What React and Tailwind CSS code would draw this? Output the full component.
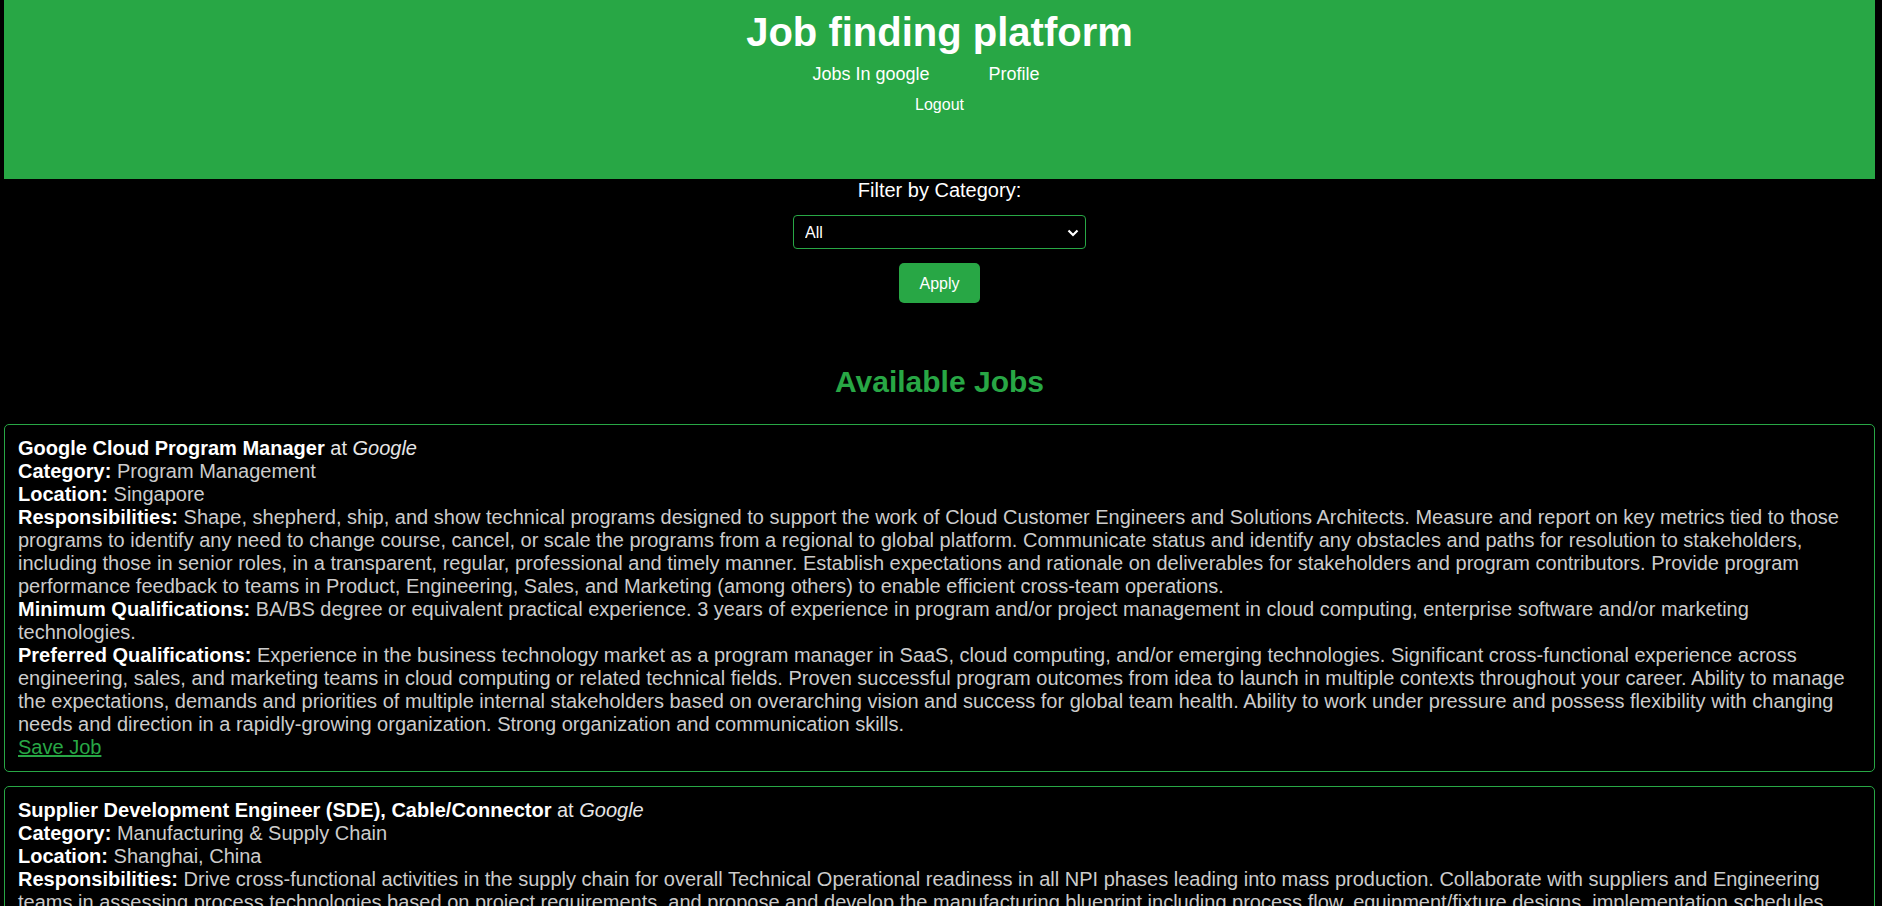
import React, { useState } from 'react'

const jobs = [
    {
        id: 1,
        title: 'Google Cloud Program Manager',
        company: 'Google',
        category: 'Program Management',
        location: 'Singapore',
        responsibilities:
            'Shape, shepherd, ship, and show technical programs designed to support the work of Cloud Customer Engineers and Solutions Architects. Measure and report on key metrics tied to those programs to identify any need to change course, cancel, or scale the programs from a regional to global platform. Communicate status and identify any obstacles and paths for resolution to stakeholders, including those in senior roles, in a transparent, regular, professional and timely manner. Establish expectations and rationale on deliverables for stakeholders and program contributors. Provide program performance feedback to teams in Product, Engineering, Sales, and Marketing (among others) to enable efficient cross-team operations.',
        minimum:
            'BA/BS degree or equivalent practical experience. 3 years of experience in program and/or project management in cloud computing, enterprise software and/or marketing technologies.',
        preferred:
            'Experience in the business technology market as a program manager in SaaS, cloud computing, and/or emerging technologies. Significant cross-functional experience across engineering, sales, and marketing teams in cloud computing or related technical fields. Proven successful program outcomes from idea to launch in multiple contexts throughout your career. Ability to manage the expectations, demands and priorities of multiple internal stakeholders based on overarching vision and success for global team health. Ability to work under pressure and possess flexibility with changing needs and direction in a rapidly-growing organization. Strong organization and communication skills.',
    },
    {
        id: 2,
        title: 'Supplier Development Engineer (SDE), Cable/Connector',
        company: 'Google',
        category: 'Manufacturing & Supply Chain',
        location: 'Shanghai, China',
        responsibilities:
            'Drive cross-functional activities in the supply chain for overall Technical Operational readiness in all NPI phases leading into mass production. Collaborate with suppliers and Engineering teams in assessing process technologies based on project requirements, and propose and develop the manufacturing blueprint including process flow, equipment/fixture designs, implementation schedules, and validation plans. Conduct audits and supplier capability assessments to drive continuous improvement in quality, yield and cost.',
        minimum:
            "Bachelor's degree in Mechanical Engineering, Electrical Engineering, Industrial Engineering or equivalent practical experience. 4 years of experience in supplier development within cable and connector manufacturing.",
        preferred:
            'Experience with cable and connector manufacturing processes. Ability to communicate fluently in English and Mandarin Chinese.',
    },
]

const Row = ({ label, children }) => (
    <div>
        <strong className="font-bold text-white">{label}</strong>{' '}
        <span className="text-[#cccccc]">{children}</span>
    </div>
)

const App = () => {
    const [category, setCategory] = useState('All')

    return (
        <div className="min-h-screen bg-black pl-[4px] pr-[7px] text-[20px] leading-[23px] text-white font-['Liberation_Sans',Arial,sans-serif]">
            {/* header */}
            <header className="h-[179px] bg-[#28a745] pt-[9px] text-center">
                <h1 className="text-[40px] font-bold leading-[46px] text-white">Job finding platform</h1>
                <nav className="mt-[9px] flex justify-center gap-[59px] pr-[27px] text-[18px] leading-[21px]">
                    <a href="#" className="text-white no-underline">Jobs In google</a>
                    <a href="#" className="text-white no-underline">Profile</a>
                </nav>
                <button className="mt-[11px] bg-transparent text-[16px] leading-[18px] text-white">Logout</button>
            </header>

            {/* filter */}
            <div className="flex flex-col items-center">
                <label className="leading-[23px] text-white">Filter by Category:</label>
                <div className="relative mt-[13px]">
                    <select
                        value={category}
                        onChange={(e) => setCategory(e.target.value)}
                        className="h-[34px] w-[293px] appearance-none rounded-[4px] border border-[#28a745] bg-black pl-[11px] text-[16px] text-white outline-none"
                    >
                        <option>All</option>
                        <option>Program Management</option>
                        <option>Manufacturing &amp; Supply Chain</option>
                    </select>
                    <svg
                        className="pointer-events-none absolute right-[7px] top-[14px]"
                        width="12"
                        height="8"
                        viewBox="0 0 12 8"
                        fill="none"
                    >
                        <path d="M1.5 1.5 L6 6 L10.5 1.5" stroke="white" strokeWidth="2.2" />
                    </svg>
                </div>
                <button className="mt-[14px] h-[40px] w-[81px] rounded-[5px] bg-[#28a745] text-[16px] text-white">
                    Apply
                </button>
            </div>

            <h2 className="mt-[61px] text-center text-[30px] font-bold leading-[35px] text-[#28a745]">Available Jobs</h2>

            {/* job list */}
            <div className="mt-[25px]">
                {jobs.map((job) => (
                    <div key={job.id} className="mb-[14px] rounded-[5px] border border-[#28a745] px-[13px] py-[12px]">
                        <div>
                            <strong className="font-bold text-white">{job.title}</strong>
                            <span className="text-[#e6e6e6]"> at </span>
                            <em className="italic text-[#e6e6e6]">{job.company}</em>
                        </div>
                        <Row label="Category:">{job.category}</Row>
                        <Row label="Location:">{job.location}</Row>
                        <Row label="Responsibilities:">{job.responsibilities}</Row>
                        <Row label="Minimum Qualifications:">{job.minimum}</Row>
                        <Row label="Preferred Qualifications:">{job.preferred}</Row>
                        <a href="#" className="text-[#28a745] underline">Save Job</a>
                    </div>
                ))}
            </div>
        </div>
    )
}

export default App
